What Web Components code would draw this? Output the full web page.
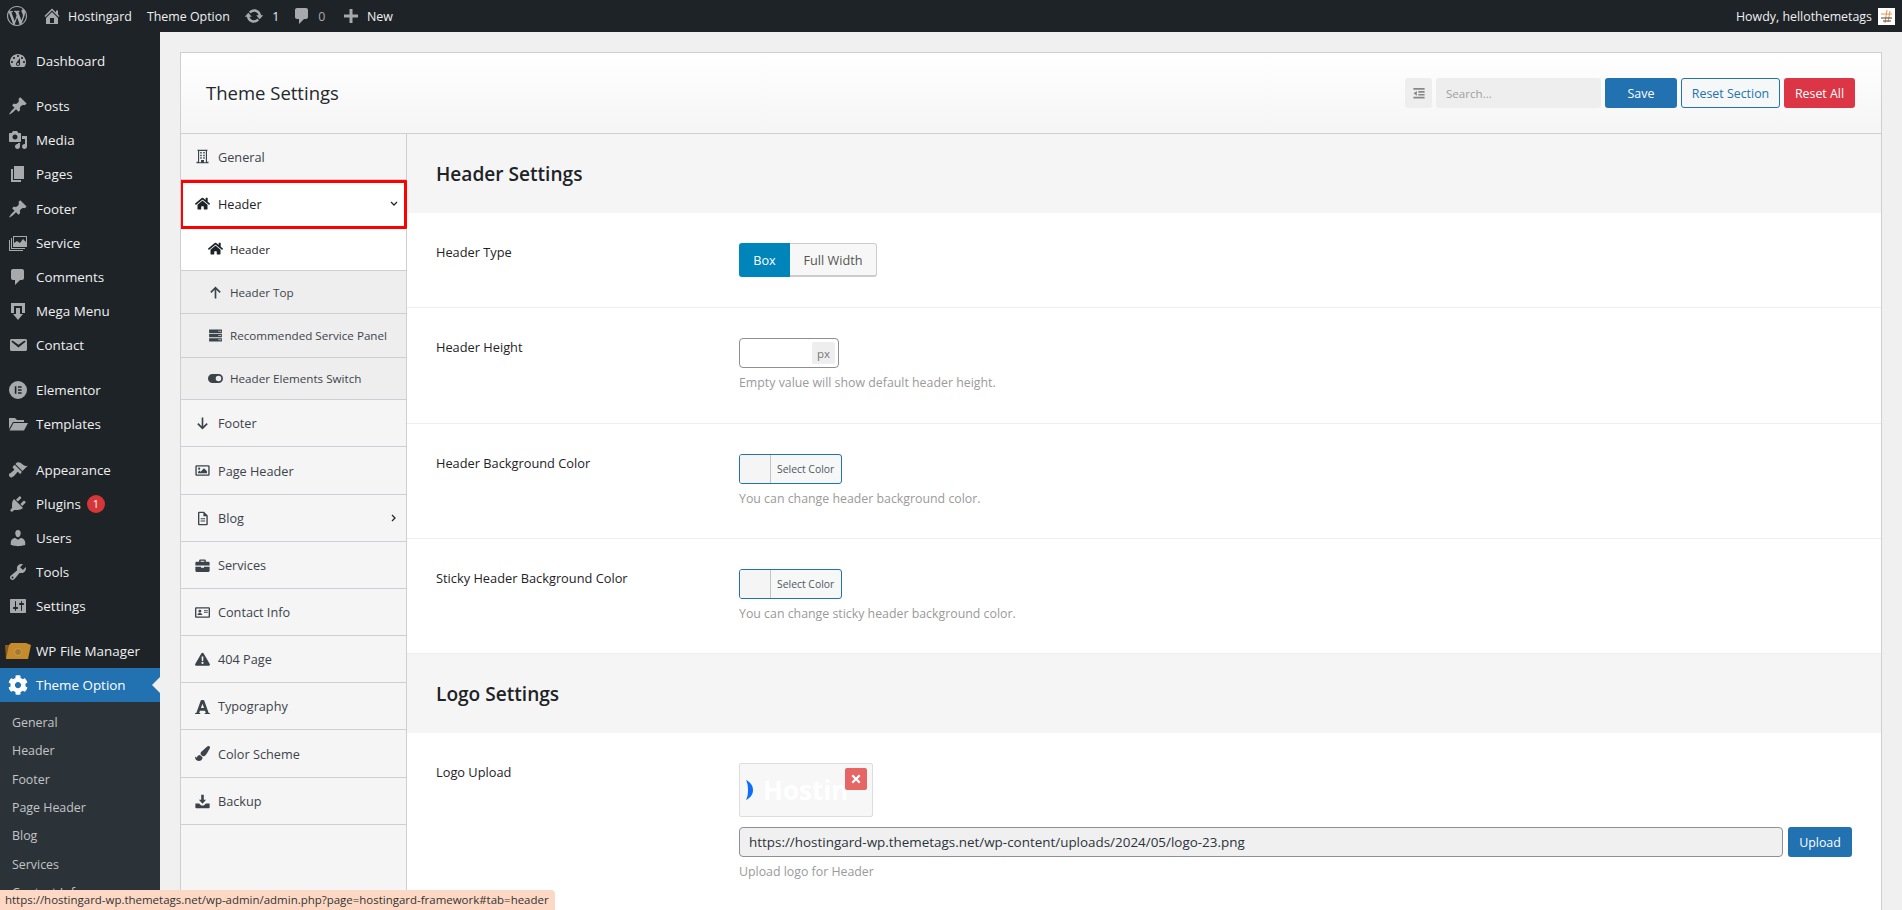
<!DOCTYPE html>
<html lang="en">
<head>
<meta charset="utf-8">
<title>Theme Settings</title>
<style>
  html, body { margin: 0; height: 910px; overflow: hidden; }
  body {
    background: #f0f0f1;
    font-family: "Open Sans", "Liberation Sans", sans-serif;
    font-size: 13px;
    color: #3c434a;
  }
  wp-shell { display: block; }
</style>
</head>
<body>
<wp-shell>
  <admin-bar slot="bar"></admin-bar>
  <side-menu slot="menu">
    <menu-item icon="dashboard" class="first">Dashboard</menu-item>
    <menu-sep></menu-sep>
    <menu-item icon="pin">Posts</menu-item>
    <menu-item icon="media">Media</menu-item>
    <menu-item icon="page">Pages</menu-item>
    <menu-item icon="pin">Footer</menu-item>
    <menu-item icon="images">Service</menu-item>
    <menu-item icon="comment">Comments</menu-item>
    <menu-item icon="mega">Mega Menu</menu-item>
    <menu-item icon="email">Contact</menu-item>
    <menu-sep></menu-sep>
    <menu-item icon="elementor">Elementor</menu-item>
    <menu-item icon="folder">Templates</menu-item>
    <menu-sep></menu-sep>
    <menu-item icon="brush">Appearance</menu-item>
    <menu-item icon="plugin" badge="1">Plugins</menu-item>
    <menu-item icon="users">Users</menu-item>
    <menu-item icon="tools">Tools</menu-item>
    <menu-item icon="sliders">Settings</menu-item>
    <menu-sep style="--gap:10.2px"></menu-sep>
    <menu-item icon="filemanager">WP File Manager</menu-item>
    <menu-item icon="gear" current>Theme Option</menu-item>
    <sub-menu>
      <a>General</a><a>Header</a><a>Footer</a><a>Page Header</a><a>Blog</a><a>Services</a><a>Contact Info</a>
    </sub-menu>
  </side-menu>

  <settings-card slot="main">
    <tab-item icon="building" style="--h:46px">General</tab-item>
    <tab-item icon="home" active marked arrow="down" style="--h:49px">Header</tab-item>
    <tab-item icon="home" sub active style="--h:42px">Header</tab-item>
    <tab-item icon="up" sub style="--h:43px">Header Top</tab-item>
    <tab-item icon="server" sub style="--h:44px">Recommended Service Panel</tab-item>
    <tab-item icon="toggle" sub style="--h:42px">Header Elements Switch</tab-item>
    <tab-item icon="down" style="--h:47px">Footer</tab-item>
    <tab-item icon="image" style="--h:48px">Page Header</tab-item>
    <tab-item icon="file" arrow="right" style="--h:47px">Blog</tab-item>
    <tab-item icon="briefcase" style="--h:47px">Services</tab-item>
    <tab-item icon="idcard" style="--h:47px">Contact Info</tab-item>
    <tab-item icon="warning" style="--h:47px">404 Page</tab-item>
    <tab-item icon="font" style="--h:47px">Typography</tab-item>
    <tab-item icon="paint" style="--h:48px">Color Scheme</tab-item>
    <tab-item icon="download" style="--h:47px">Backup</tab-item>

    <section-title slot="panel" style="--h:79px">Header Settings</section-title>
    <setting-row slot="panel" label="Header Type" style="--h:95px">
      <button-set></button-set>
    </setting-row>
    <setting-row slot="panel" label="Header Height" desc="Empty value will show default header height." style="--h:116px">
      <unit-input></unit-input>
    </setting-row>
    <setting-row slot="panel" label="Header Background Color" desc="You can change header background color." style="--h:115px">
      <color-pick></color-pick>
    </setting-row>
    <setting-row slot="panel" label="Sticky Header Background Color" desc="You can change sticky header background color." style="--h:115px">
      <color-pick></color-pick>
    </setting-row>
    <section-title slot="panel" style="--h:79px">Logo Settings</section-title>
    <setting-row slot="panel" label="Logo Upload" desc="Upload logo for Header" style="--h:190px">
      <logo-upload></logo-upload>
    </setting-row>
  </settings-card>
</wp-shell>
<status-tip>https://hostingard-wp.themetags.net/wp-admin/admin.php?page=hostingard-framework#tab=header</status-tip>

<script>
const ICONS = {
  wp: [20, '<path d="M20 10c0-5.51-4.49-10-10-10C4.48 0 0 4.49 0 10c0 5.52 4.48 10 10 10 5.51 0 10-4.48 10-10zM7.78 15.37L4.37 6.22c.55-.02 1.17-.08 1.17-.08.5-.06.44-1.13-.06-1.11 0 0-1.45.11-2.37.11-.18 0-.37 0-.58-.01C4.12 2.69 6.87 1.11 10 1.11c2.33 0 4.45.87 6.05 2.34-.68-.11-1.65.39-1.65 1.58 0 .74.45 1.36.9 2.1.35.61.55 1.36.55 2.46 0 1.49-1.4 5-1.4 5l-3.03-8.37c.54-.02.82-.17.82-.17.5-.05.44-1.25-.06-1.22 0 0-1.44.12-2.38.12-.87 0-2.33-.12-2.33-.12-.5-.03-.56 1.2-.06 1.22l.92.08 1.26 3.41zM17.41 10c.24-.64.74-1.87.43-4.25.7 1.29 1.05 2.71 1.05 4.25 0 3.29-1.73 6.24-4.4 7.78.97-2.59 1.94-5.2 2.92-7.78zM6.1 18.09C3.12 16.65 1.11 13.53 1.11 10c0-1.3.23-2.48.72-3.59C3.25 10.3 4.67 14.2 6.1 18.09zm4.03-6.63l2.58 6.98c-.86.29-1.76.45-2.71.45-.79 0-1.57-.11-2.29-.33.81-2.38 1.62-4.74 2.42-7.1z"/>'],
  dashboard: [20, '<path d="M3.76 16h12.48c1.1-1.37 1.76-3.11 1.76-5 0-4.42-3.58-8-8-8s-8 3.58-8 8c0 1.89.66 3.63 1.76 5zM10 4c.55 0 1 .45 1 1s-.45 1-1 1-1-.45-1-1 .45-1 1-1zM6 6c.55 0 1 .45 1 1s-.45 1-1 1-1-.45-1-1 .45-1 1-1zm8 0c.55 0 1 .45 1 1s-.45 1-1 1-1-.45-1-1 .45-1 1-1zm-5.37 5.55L12 7v6c0 1.1-.9 2-2 2s-2-.9-2-2c0-.57.24-1.08.63-1.45zM4 10c.55 0 1 .45 1 1s-.45 1-1 1-1-.45-1-1 .45-1 1-1zm12 0c.55 0 1 .45 1 1s-.45 1-1 1-1-.45-1-1 .45-1 1-1zm-5 3c0-.55-.45-1-1-1s-1 .45-1 1 .45 1 1 1 1-.45 1-1z" fill-rule="evenodd"/>'],
  pin: [20, '<path d="M10.44 3.02l1.82-1.82 6.36 6.35-1.83 1.82c-1.05-.68-2.48-.57-3.41.36l-.75.75c-.92.93-1.04 2.35-.35 3.41l-1.83 1.82-2.41-2.41-2.8 2.79c-.42.42-3.38 2.71-3.8 2.29s1.86-3.39 2.28-3.81l2.79-2.79L4.1 9.36l1.83-1.82c1.05.69 2.48.57 3.4-.36l.75-.75c.93-.92 1.05-2.35.36-3.41z"/>'],
  media: [20, '<path d="M13 11V4c0-.55-.45-1-1-1h-1.67L9 1H5L3.67 3H2c-.55 0-1 .45-1 1v7c0 .55.45 1 1 1h10c.55 0 1-.45 1-1zM7 4.5c1.38 0 2.5 1.12 2.5 2.5S8.38 9.5 7 9.5 4.5 8.38 4.5 7 5.62 4.5 7 4.5zM14 6h5v10.5c0 1.38-1.12 2.5-2.5 2.5S14 17.88 14 16.5s1.12-2.5 2.5-2.5c.17 0 .34.02.5.05V9h-3V6zm-4 8.05V13h2v3.5c0 1.38-1.12 2.5-2.5 2.5S7 17.88 7 16.5 8.12 14 9.5 14c.17 0 .34.02.5.05z"/>'],
  page: [20, '<path d="M6 15V2h10v13H6zm-1 1h8v2H3V5h2v11z"/>'],
  images: [20, '<path fill-rule="evenodd" d="M5 3h14v11H5zM6 4v6l3-2 3 2 3-4 3 3V4zM3 5h1v10h13v1H3zM1 7h1v10h13v1H1z"/>'],
  comment: [20, '<path d="M5 2h9c1.1 0 2 .9 2 2v7c0 1.1-.9 2-2 2h-2l-5 5v-5H5c-1.1 0-2-.9-2-2V4c0-1.1.9-2 2-2z"/>'],
  mega: [20, '<path d="M3 2h14v10h-3V5H6v7H3z"/><path d="M8 7h4v6h3l-5 6-5-6h3z"/>'],
  email: [20, '<path d="M3.87 4h13.25C18.37 4 19 4.59 19 5.79v8.42c0 1.19-.63 1.79-1.88 1.79H3.87c-1.25 0-1.88-.6-1.88-1.79V5.79c0-1.2.63-1.79 1.88-1.79zm6.62 8.6l6.74-5.53c.24-.2.43-.66.13-1.07-.29-.41-.82-.42-1.17-.17l-5.7 3.86L4.8 5.83c-.35-.25-.88-.24-1.17.17-.3.41-.11.87.13 1.07z"/>'],
  elementor: [20, '<path fill-rule="evenodd" d="M10 1a9 9 0 100 18 9 9 0 000-18zM6.8 6.2h1.6v7.6H6.8zM10 6.2h3.6v1.5H10zM10 9.2h3.6v1.5H10zM10 12.3h3.6v1.5H10z"/>'],
  folder: [20, '<path d="M1 4h6l2 2h7v2H5L1 15z"/><path d="M5.5 9H20l-4 7.5H1.5z"/>'],
  brush: [20, '<path d="M14.48 11.06L7.41 3.99l1.5-1.5c.5-.56 2.3-.47 3.51.32 1.21.8 1.43 1.28 2.91 2.1 1.18.64 2.45 1.26 4.45.85zm-.71.71L6.7 4.7 4.93 6.47c-.39.39-.39 1.02 0 1.41l1.06 1.06c.39.39.39 1.03 0 1.42-.6.6-1.43 1.11-2.21 1.69-.35.26-.7.53-1.01.84C1.43 13.23.91 14.1 1 15.19c.12 1.21.99 2.08 2.2 2.2 1.08.1 1.96-.42 3.31-1.77.31-.31.58-.66.84-1.01.58-.78 1.09-1.61 1.69-2.21.39-.39 1.03-.39 1.42 0l1.06 1.06c.39.39 1.02.39 1.41 0z"/>'],
  plugin: [20, '<path d="M13.11 4.36L9.87 7.6 8 5.73l3.24-3.24c.35-.34 1.05-.2 1.56.32.52.51.66 1.21.31 1.55zm-8 1.77l.91-1.12 9.01 9.01-1.19.84c-.71.71-2.63 1.16-3.82 1.16H6.14L4.9 17.26c-.59.59-1.54.59-2.12 0-.59-.58-.59-1.53 0-2.12l1.24-1.24v-3.88c0-1.13.4-3.19 1.09-3.89zm7.26 3.97l3.24-3.24c.34-.35 1.04-.21 1.55.31.52.51.66 1.21.31 1.55l-3.24 3.25z"/>'],
  users: [20, '<path d="M10 9.25c-2.27 0-2.73-3.44-2.73-3.44C7 4.02 7.82 2 9.97 2c2.16 0 2.98 2.02 2.71 3.81 0 0-.41 3.44-2.68 3.44zm0 2.57L12.72 10c2.39 0 4.52 2.33 4.52 4.53v2.49s-3.65 1.13-7.24 1.13c-3.65 0-7.24-1.13-7.24-1.13v-2.49c0-2.25 1.94-4.48 4.47-4.48z"/>'],
  tools: [20, '<path d="M16.68 9.77c-1.34 1.34-3.3 1.67-4.95.99l-5.41 6.52c-.99.99-2.59.99-3.58 0s-.99-2.59 0-3.57l6.52-5.42c-.68-1.65-.35-3.61.99-4.95 1.28-1.28 3.12-1.62 4.72-1.06l-2.89 2.89 2.82 2.82 2.86-2.87c.53 1.58.18 3.39-1.08 4.65zM3.81 16.21c.4.39 1.04.39 1.43 0 .4-.4.4-1.04 0-1.43-.39-.4-1.03-.4-1.43 0-.39.39-.39 1.03 0 1.43z"/>'],
  sliders: [20, '<path d="M18 16V4c0-.55-.45-1-1-1H3c-.55 0-1 .45-1 1v12c0 .55.45 1 1 1h14c.55 0 1-.45 1-1zM8 11h1c.55 0 1 .45 1 1s-.45 1-1 1H8v1.5c0 .28-.22.5-.5.5s-.5-.22-.5-.5V13H6c-.55 0-1-.45-1-1s.45-1 1-1h1V5.5c0-.28.22-.5.5-.5s.5.22.5.5V11zm5-2h-1c-.55 0-1-.45-1-1s.45-1 1-1h1V5.5c0-.28.22-.5.5-.5s.5.22.5.5V7h1c.55 0 1 .45 1 1s-.45 1-1 1h-1v5.5c0 .28-.22.5-.5.5s-.5-.22-.5-.5V9z"/>'],
  update: [20, '<path d="M10.2 3.28c3.53 0 6.43 2.61 6.92 6h2.08l-3.5 4-3.5-4h2.32c-.45-1.97-2.21-3.45-4.32-3.45-1.45 0-2.73.71-3.54 1.78L4.95 5.66C6.23 4.2 8.11 3.28 10.2 3.28zm-.4 13.44c-3.52 0-6.43-2.61-6.92-6H.8l3.5-4c1.17 1.33 2.33 2.67 3.5 4H5.48c.45 1.97 2.21 3.45 4.32 3.45 1.45 0 2.73-.71 3.54-1.78l1.71 1.95c-1.28 1.46-3.15 2.38-5.25 2.38z"/>'],
  wphome: [20, '<path fill-rule="evenodd" d="M16 8.5l1.53 1.53-1.06 1.06L10 4.62l-6.47 6.47-1.06-1.06L10 2.5l4 4v-2h2v4zm-6-2.46l6 5.99V18H4v-5.97zM12 17v-5H8v5h4z"/>'],
  plus: [20, '<path d="M17 8.5v3h-5.5V17h-3v-5.5H3v-3h5.5V3h3v5.5z"/>'],
  gear: [512, '<path d="M487.4 315.7l-42.6-24.6c4.3-23.2 4.3-47 0-70.2l42.6-24.6c4.9-2.8 7.1-8.6 5.5-14-11.1-35.6-30-67.8-54.7-94.6-3.8-4.1-10-5.1-14.8-2.3L380.8 110c-17.9-15.4-38.5-27.3-60.8-35.1V25.8c0-5.6-3.9-10.5-9.4-11.7-36.7-8.2-74.3-7.8-109.2 0-5.5 1.2-9.4 6.1-9.4 11.7V75c-22.2 7.9-42.8 19.8-60.8 35.1L88.7 85.5c-4.9-2.8-11-1.9-14.8 2.3-24.7 26.7-43.6 58.9-54.7 94.6-1.7 5.4.6 11.2 5.5 14L67.3 221c-4.3 23.2-4.3 47 0 70.2l-42.6 24.6c-4.9 2.8-7.1 8.6-5.5 14 11.1 35.6 30 67.8 54.7 94.6 3.8 4.1 10 5.1 14.8 2.3l42.6-24.6c17.9 15.4 38.5 27.3 60.8 35.1v49.2c0 5.6 3.9 10.5 9.4 11.7 36.7 8.2 74.3 7.8 109.2 0 5.5-1.2 9.4-6.1 9.4-11.7v-49.2c22.2-7.9 42.8-19.8 60.8-35.1l42.6 24.6c4.9 2.8 11 1.9 14.8-2.3 24.7-26.7 43.6-58.9 54.7-94.6 1.5-5.5-.7-11.3-5.6-14.1zM256 336c-44.1 0-80-35.9-80-80s35.9-80 80-80 80 35.9 80 80-35.9 80-80 80z"/>'],
  home: [576, '<path d="M280.37 148.26L96 300.11V464a16 16 0 0 0 16 16l112.06-.29a16 16 0 0 0 15.92-16V368a16 16 0 0 1 16-16h64a16 16 0 0 1 16 16v95.64a16 16 0 0 0 16 16.05L464 480a16 16 0 0 0 16-16V300L295.67 148.26a12.19 12.19 0 0 0-15.3 0zM571.6 251.47L488 182.56V44.05a12 12 0 0 0-12-12h-56a12 12 0 0 0-12 12v72.61L318.47 43a48 48 0 0 0-61 0L4.34 251.47a12 12 0 0 0-1.6 16.9l25.5 31A12 12 0 0 0 45.15 301l235.22-193.74a12.19 12.19 0 0 1 15.3 0L530.9 301a12 12 0 0 0 16.9-1.6l25.5-31a12 12 0 0 0-1.7-16.93z"/>'],
  building: [20, '<path fill-rule="evenodd" d="M3 1h14v1h-1v15h2v2H2v-2h2V2H3zM5.500 2.500V17.500h2.500v-3h4v3h2.500V2.500zM7 4h2v2H7zM11 4h2v2h-2zM7 7.500h2v2H7zM11 7.500h2v2h-2zM7 11h2v2H7zM11 11h2v2h-2z"/>'],
  up: [20, '<path d="M10 2l7 7-1.600 1.600-4.300-4.200V18H8.900V6.400l-4.300 4.200L3 9z"/>'],
  down: [20, '<path d="M10 18l7-7-1.600-1.600-4.300 4.200V2H8.900v11.600L4.600 9.400 3 11z"/>'],
  server: [20, '<path fill-rule="evenodd" d="M1.500 2h17v4.500h-17zM14 3.600h1.500v1.300H14zM16.200 3.600h1v1.300h-1zM1.500 7.800h17v4.500h-17zM14 9.400h1.500v1.300H14zM16.200 9.400h1v1.300h-1zM1.500 13.500h17V18h-17zM14 15.100h1.500v1.300H14zM16.200 15.100h1v1.300h-1z"/>'],
  toggle: [20, '<path fill-rule="evenodd" d="M6 4h8a6 6 0 010 12H6A6 6 0 016 4zM14 6.300a3.700 3.700 0 100 7.400 3.700 3.700 0 000-7.400z"/>'],
  image: [20, '<path fill-rule="evenodd" d="M2 3h16a1.500 1.500 0 011.500 1.500v11A1.500 1.500 0 0118 17H2A1.500 1.500 0 01.500 15.500v-11A1.500 1.500 0 012 3zM2.300 4.800v10.400h15.400V4.800zM5.500 6a1.500 1.500 0 110 3 1.500 1.500 0 010-3zM4 13.500V12l2-2 1.500 1.500L12 7l4 4v2.500z"/>'],
  file: [20, '<path fill-rule="evenodd" d="M5 1h7l5 5v11.500a1.500 1.500 0 01-1.500 1.500h-10A1.500 1.500 0 014 17.500V2.500A1.500 1.500 0 015 1zM5.800 2.800v14.400h9.400V7h-4V2.800zM7.500 9.500h6V11h-6zM7.500 12.500h6V14h-6z"/>'],
  briefcase: [20, '<path fill-rule="evenodd" d="M7 2h6a1.500 1.500 0 011.500 1.500V5H18a1.500 1.500 0 011.500 1.500V10H.5V6.500A1.500 1.500 0 012 5h3.500V3.500A1.500 1.500 0 017 2zM7.500 3.800V5h5V3.800zM.5 11.500H8V13h4v-1.500h7.500V17a1.500 1.500 0 01-1.500 1.500H2A1.500 1.500 0 01.500 17z"/>'],
  idcard: [20, '<path fill-rule="evenodd" d="M1.500 3h17A1.500 1.500 0 0120 4.500v11a1.500 1.500 0 01-1.500 1.500h-17A1.500 1.500 0 010 15.500v-11A1.500 1.500 0 011.500 3zM1.800 4.800v10.400h16.400V4.800zM6.500 6.300a1.900 1.900 0 110 3.800 1.900 1.900 0 010-3.800zM3.300 13.300c0-1.700 1.300-2.700 3.200-2.700s3.200 1 3.200 2.700zM12 7h5v1.300h-5zM12 9.500h5v1.300h-5z"/>'],
  warning: [20, '<path fill-rule="evenodd" d="M10 1.500c.6 0 1.100.3 1.400.8l8.300 14.300c.6 1-.2 2.400-1.400 2.400H1.700c-1.200 0-2-1.400-1.400-2.400L8.600 2.300c.3-.5.8-.8 1.400-.8zM8.800 6.500l.3 6.200h1.800l.3-6.200zM10 13.700a1.500 1.500 0 100 3 1.500 1.500 0 000-3z"/>'],
  font: [448, '<path d="M432 416h-23.410L277.880 53.690A32 32 0 0 0 247.580 32h-47.160a32 32 0 0 0-30.300 21.690L39.410 416H16a16 16 0 0 0-16 16v32a16 16 0 0 0 16 16h128a16 16 0 0 0 16-16v-32a16 16 0 0 0-16-16h-19.580l23.300-64h152.560l23.300 64H304a16 16 0 0 0-16 16v32a16 16 0 0 0 16 16h128a16 16 0 0 0 16-16v-32a16 16 0 0 0-16-16zM176.850 272L224 142.510 271.150 272z"/>'],
  paint: [512, '<path d="M167.020 309.340c-40.120 2.580-76.530 17.860-97.190 72.300-2.350 6.210-8 9.980-14.590 9.980-11.110 0-45.460-27.670-55.250-34.350C0 439.620 37.930 512 128 512c75.860 0 128-43.770 128-120.190 0-3.110-.65-6.080-.97-9.130l-88.010-73.340zM457.890 0c-15.160 0-29.370 6.710-40.210 16.450C213.270 199.050 192 203.340 192 257.090c0 13.700 3.250 26.760 8.730 38.700l63.820 53.180c7.210 1.800 14.640 3.030 22.390 3.030 62.110 0 98.110-45.470 211.160-256.460 7.380-14.350 13.900-29.850 13.900-45.990C512 20.640 486 0 457.890 0z"/>'],
  download: [20, '<path d="M8.300 1h3.400v6.500h3.100L10 13 5.200 7.500h3.100z"/><path d="M.5 12.500h5l2.800 2.700h3.400l2.800-2.700h5V18a1 1 0 01-1 1h-17a1 1 0 01-1-1z"/>'],
  outdent: [20, '<path d="M2 3h16v2.500H2zM9 7.200h9v2.400H9zM9 11.300h9v2.400H9zM2 15.500h16V18H2zM7 7v7l-5-3.500z"/>'],
  close: [20, '<path d="M5.200 2.500L10 7.300l4.800-4.800 2.700 2.700L12.700 10l4.800 4.800-2.700 2.700-4.800-4.800-4.800 4.800-2.700-2.700L7.300 10 2.500 5.200z"/>']
};

function iconSvg(name, size) {
  if (name === "filemanager") {
    return `<svg width="${size}" height="${size}" viewBox="0 0 26 20">
      <path fill="#8a5a1a" d="M0 4h9l2-2h9v16H1z"/>
      <path fill="#c58a2c" d="M6 2h15l5 2-3 14H1l3-14z"/>
      <circle cx="13" cy="11" r="3.500" fill="#a3772f" stroke="#d9b36a" stroke-width=".6"/></svg>`;
  }
  const [box, body] = ICONS[name];
  return `<svg width="${size}" height="${size}" viewBox="0 0 ${box} ${box}" fill="currentColor" style="display:block">${body}</svg>`;
}

class WpShell extends HTMLElement {
  constructor() {
    super();
    this._shadowRoot = this.attachShadow({ mode: "open" });
    this._shadowRoot.innerHTML = `
      <style>
        :host { display: block; height: 910px; overflow: hidden; }
        .body { display: flex; height: 878px; }
        .main { flex: 1; min-width: 0; padding: 20px 20px 0 20px; }
      </style>
      <slot name="bar"></slot>
      <div class="body">
        <slot name="menu"></slot>
        <div class="main"><slot name="main"></slot></div>
      </div>
    `;
  }
}

class AdminBar extends HTMLElement {
  constructor() {
    super();
    this._shadowRoot = this.attachShadow({ mode: "open" });
    this._shadowRoot.innerHTML = `
      <style>
        :host {
          display: flex;
          height: 32px;
          background: #1d2327;
          color: #f0f0f1;
          font-size: 12.4px;
          align-items: center;
          padding-left: 7px;
          padding-right: 7px;
        }
        .ico { color: #a7aaad; flex: none; }
        .txt { margin-left: 6px; }
        .dim { color: #a7aaad; }
        .spacer { flex: 1; }
        .avatar { display: block; margin-left: 6px; background: #fff; }
      </style>
      <span class="ico">${iconSvg("wp", 20)}</span>
      <span class="ico" style="margin-left:15px">${iconSvg("wphome", 20)}</span>
      <span class="txt">Hostingard</span>
      <span class="txt" style="margin-left:15px">Theme Option</span>
      <span class="ico" style="margin-left:14.5px">${iconSvg("update", 20)}</span>
      <span class="txt" style="margin-left:8px">1</span>
      <span class="ico" style="margin-left:13px">${iconSvg("comment", 20)}</span>
      <span class="txt dim" style="margin-left:6px">0</span>
      <span class="ico" style="margin-left:15.5px">${iconSvg("plus", 20)}</span>
      <span class="txt">New</span>
      <span class="spacer"></span>
      <span>Howdy, hellothemetags</span>
      <svg class="avatar" width="17" height="17" viewBox="0 0 17 17">
        <path d="M9 2L7 15M12 3l-2 11M3 6h11" stroke="#e8944a" stroke-width="1" fill="none"/>
        <path d="M3 10h11M5 13h8" stroke="#444" stroke-width="1" fill="none"/>
      </svg>
    `;
  }
}

class SideMenu extends HTMLElement {
  constructor() {
    super();
    this._shadowRoot = this.attachShadow({ mode: "open" });
    this._shadowRoot.innerHTML = `
      <style>
        :host {
          display: block;
          flex: none;
          width: 160px;
          background: #1d2327;
          padding-top: 12px;
          box-sizing: border-box;
        }
      </style>
      <slot></slot>
    `;
  }
}

class MenuSep extends HTMLElement {
  constructor() {
    super();
    this.attachShadow({ mode: "open" }).innerHTML = `<style>:host { display: block; height: var(--gap, 11px); }</style>`;
  }
}

class MenuItem extends HTMLElement {
  constructor() {
    super();
    this._shadowRoot = this.attachShadow({ mode: "open" });
  }

  connectedCallback() {
    const icon = this.getAttribute("icon");
    const badge = this.getAttribute("badge");
    this._shadowRoot.innerHTML = `
      <style>
        :host {
          display: flex;
          position: relative;
          height: 34.15px;
          align-items: center;
          color: #f0f0f1;
          font-size: 13.4px;
        }
        :host([current]) {
          background: #2271b1;
          color: #fff;
          height: 34px;
        }
        :host([current]) .ico { color: #fff; }
        :host([current])::after {
          content: "";
          position: absolute;
          right: 0;
          top: 50%;
          margin-top: -8px;
          border: 8px solid transparent;
          border-right-color: #f0f0f1;
          border-left: 0;
        }
        .ico { width: 36px; display: flex; justify-content: center; color: #a7aaad; padding-right: 0; flex: none; }
        .badge {
          width: 18px;
          height: 18px;
          border-radius: 50%;
          background: #d63638;
          color: #fff;
          font-size: 11px;
          display: inline-flex;
          align-items: center;
          justify-content: center;
          margin-left: 6px;
        }
      </style>
      <span class="ico">${iconSvg(icon, icon === "filemanager" ? 26 : 20)}</span>
      <slot></slot>
      ${badge ? `<span class="badge">${badge}</span>` : ""}
    `;
  }
}

class SubMenu extends HTMLElement {
  constructor() {
    super();
    this._shadowRoot = this.attachShadow({ mode: "open" });
    this._shadowRoot.innerHTML = `
      <style>
        :host {
          display: block;
          background: #2c3338;
          padding: 7.5px 0 7px 12px;
          color: #c3c4c7;
          font-size: 12.4px;
        }
        ::slotted(a) {
          display: block;
          height: 28.3px;
          line-height: 28.3px;
        }
      </style>
      <slot></slot>
    `;
  }
}

class SettingsCard extends HTMLElement {
  constructor() {
    super();
    this._shadowRoot = this.attachShadow({ mode: "open" });
    this._shadowRoot.innerHTML = `
      <style>
        :host {
          display: block;
          height: 880px;
          background: #fff;
          border: 1px solid #ccd0d4;
          box-sizing: border-box;
          overflow: hidden;
          font-family: "Open Sans", "Liberation Sans", sans-serif;
        }
        header {
          display: flex;
          align-items: center;
          height: 80px;
          padding: 0 26px 0 25px;
          border-bottom: 1px solid #ccd0d4;
          background: linear-gradient(#ffffff, #f5f5f5);
        }
        h1 {
          margin: 0 0 2px;
          flex: 1;
          font-size: 18.5px;
          font-weight: 400;
          color: #23282d;
        }
        .tools { display: flex; gap: 4px; }
        .tools > * {
          box-sizing: border-box;
          height: 30px;
          border-radius: 3px;
          display: flex;
          align-items: center;
          justify-content: center;
          font-size: 12.4px;
        }
        .toggle { width: 27px; background: #eee; color: #888; }
        .search { width: 165px; background: #eee; color: #a0a0a0; justify-content: flex-start !important; padding-left: 10px; font-size: 11.600px !important; }
        .save { width: 72px; background: #2271b1; color: #fff; }
        .reset { width: 99px; border: 1px solid #2271b1; color: #2271b1; background: #f6f7f7; }
        .all { width: 71px; background: #dc3545; color: #fff; }
        .cols { display: flex; height: 800px; }
        nav { width: 226px; flex: none; background: #f5f5f5; border-right: 1px solid #ccd0d4; box-sizing: border-box; }
        .panel { flex: 1; min-width: 0; }
      </style>
      <header>
        <h1>Theme Settings</h1>
        <div class="tools">
          <span class="toggle">${iconSvg("outdent", 14)}</span>
          <span class="search">Search...</span>
          <span class="save">Save</span>
          <span class="reset">Reset Section</span>
          <span class="all">Reset All</span>
        </div>
      </header>
      <div class="cols">
        <nav><slot></slot></nav>
        <div class="panel"><slot name="panel"></slot></div>
      </div>
    `;
  }
}

class TabItem extends HTMLElement {
  constructor() {
    super();
    this._shadowRoot = this.attachShadow({ mode: "open" });
  }

  connectedCallback() {
    const arrow = this.getAttribute("arrow");
    const chevron = arrow === "down" ? "M1 2l3 3 3-3" : "M2 1l3 3-3 3";
    const size = this.getAttribute("icon") === "warning" ? 16 : 15;
    this._shadowRoot.innerHTML = `
      <style>
        :host {
          display: flex;
          position: relative;
          box-sizing: border-box;
          height: var(--h, 47px);
          align-items: center;
          padding-left: 14px;
          border-bottom: 1px solid #ccd0d4;
          color: #3c434a;
          font-size: 12.7px;
          background: #f5f5f5;
        }
        :host([sub]) { padding-left: 27px; font-size: 11.65px; background: #eee; }
        :host([sub]) .ico { margin-right: 7px; }
        :host([active]) { background: #fff; color: #1d2327; }
        :host([marked]) { border-bottom-color: transparent; }
        :host([marked])::after {
          content: "";
          position: absolute;
          left: -1px;
          right: -1px;
          top: 0;
          bottom: -1px;
          border: 3px solid #f00;
          border-radius: 1px;
        }
        .ico { width: 15px; height: 16px; display: flex; align-items: center; justify-content: center; margin-right: 8px; flex: none; overflow: visible; }
        .arrow { position: absolute; right: 8px; top: 50%; margin-top: -4px; display: block; }
      </style>
      <span class="ico">${iconSvg(this.getAttribute("icon"), size)}</span>
      <slot></slot>
      ${arrow ? `<svg class="arrow" width="8" height="8" viewBox="0 0 8 8"><path d="${chevron}" fill="none" stroke="#23282d" stroke-width="1.300"/></svg>` : ""}
    `;
  }
}

class SectionTitle extends HTMLElement {
  constructor() {
    super();
    this._shadowRoot = this.attachShadow({ mode: "open" });
    this._shadowRoot.innerHTML = `
      <style>
        :host {
          display: flex;
          box-sizing: border-box;
          height: var(--h);
          align-items: center;
          padding-left: 29px;
          background: #f5f5f5;
          font-size: 19.1px;
          font-weight: 600;
          color: #1d2327;
        }
      </style>
      <slot></slot>
    `;
  }
}

class SettingRow extends HTMLElement {
  constructor() {
    super();
    this._shadowRoot = this.attachShadow({ mode: "open" });
  }

  connectedCallback() {
    const desc = this.getAttribute("desc");
    this._shadowRoot.innerHTML = `
      <style>
        :host {
          display: grid;
          grid-template-columns: 303px 1fr;
          box-sizing: border-box;
          height: var(--h);
          padding: 30px 30px 0 29px;
          border-bottom: 1px solid #eee;
        }
        .label { font-size: 12.8px; font-weight: 500; color: #1d2327; line-height: 18px; }
        .desc { font-size: 12.35px; color: #9a9a9a; margin-top: 7px; line-height: 16px; }
      </style>
      <div class="label">${this.getAttribute("label")}</div>
      <div>
        <slot></slot>
        ${desc ? `<div class="desc">${desc}</div>` : ""}
      </div>
    `;
  }
}

class ButtonSet extends HTMLElement {
  constructor() {
    super();
    this._shadowRoot = this.attachShadow({ mode: "open" });
    this._shadowRoot.innerHTML = `
      <style>
        :host { display: inline-flex; height: 34px; font-size: 12.7px; }
        span { display: flex; align-items: center; justify-content: center; box-sizing: border-box; }
        .on { width: 51px; background: #0085ba; color: #fff; border-radius: 3px 0 0 3px; }
        .off {
          width: 87px;
          background: #f7f7f7;
          color: #555;
          border: 1px solid #ccc;
          border-left: 0;
          border-bottom: 2px solid #ccc;
          border-radius: 0 3px 3px 0;
        }
      </style>
      <span class="on">Box</span>
      <span class="off">Full Width</span>
    `;
  }
}

class UnitInput extends HTMLElement {
  constructor() {
    super();
    this._shadowRoot = this.attachShadow({ mode: "open" });
    this._shadowRoot.innerHTML = `
      <style>
        :host {
          display: flex;
          box-sizing: border-box;
          width: 100px;
          height: 30px;
          border: 1px solid #8c8f94;
          border-radius: 4px;
          background: #fff;
          justify-content: flex-end;
          align-items: center;
          padding-right: 3px;
        }
        span {
          width: 23px;
          height: 22px;
          background: #eee;
          border-radius: 2px;
          color: #777;
          font-size: 11.5px;
          display: flex;
          align-items: center;
          justify-content: center;
        }
      </style>
      <span>px</span>
    `;
  }
}

class ColorPick extends HTMLElement {
  constructor() {
    super();
    this._shadowRoot = this.attachShadow({ mode: "open" });
    this._shadowRoot.innerHTML = `
      <style>
        :host {
          display: flex;
          box-sizing: border-box;
          width: 103px;
          height: 30px;
          border: 1px solid #2271b1;
          border-radius: 3px;
          overflow: hidden;
          background: #f6f7f7;
          font-size: 10.4px;
          color: #50575e;
        }
        .swatch { width: 30px; background: #f5f5f5; border-right: 1px solid #c3c4c7; flex: none; }
        .label { flex: 1; display: flex; align-items: center; padding-left: 6px; white-space: nowrap; }
      </style>
      <span class="swatch"></span>
      <span class="label">Select Color</span>
    `;
  }
}

class LogoUpload extends HTMLElement {
  constructor() {
    super();
    this._shadowRoot = this.attachShadow({ mode: "open" });
    this._shadowRoot.innerHTML = `
      <style>
        :host { display: block; }
        .preview {
          position: relative;
          box-sizing: border-box;
          width: 134px;
          height: 54px;
          border: 1px solid #ddd;
          border-radius: 2px;
          background: #f7f7f7;
          overflow: hidden;
          display: flex;
          align-items: center;
          padding-left: 6px;
        }
        .mark { flex: none; display: block; }
        .name { color: #fff; font-size: 26px; font-weight: 700; white-space: nowrap; margin-left: 10px; line-height: 30px; }
        .remove {
          position: absolute;
          right: 5px;
          top: 4px;
          width: 22px;
          height: 22px;
          border-radius: 2px;
          background: #e66565;
          color: #fff;
          display: flex;
          align-items: center;
          justify-content: center;
        }
        .line { display: flex; gap: 5px; margin-top: 10px; width: 1113px; }
        .url {
          flex: 1;
          box-sizing: border-box;
          height: 30px;
          border: 1px solid #8c8f94;
          border-radius: 4px;
          background: #f0f0f1;
          color: #2c3338;
          font-size: 13.43px;
          display: flex;
          align-items: center;
          padding-left: 9px;
        }
        .upload {
          width: 64px;
          height: 30px;
          border-radius: 3px;
          background: #2271b1;
          color: #fff;
          font-size: 12.4px;
          display: flex;
          align-items: center;
          justify-content: center;
        }
      </style>
      <div class="preview">
        <svg class="mark" width="7" height="20" viewBox="0 0 7 20"><path d="M0 0c4 2 7 5 7 10s-3 8-7 10c1.500-3 2-6 2-10S1.500 3 0 0z" fill="#0d6efd"/></svg>
        <span class="name">Hostin</span>
        <span class="remove">${iconSvg("close", 12)}</span>
      </div>
      <div class="line">
        <span class="url">https://hostingard-wp.themetags.net/wp-content/uploads/2024/05/logo-23.png</span>
        <span class="upload">Upload</span>
      </div>
    `;
  }
}

class StatusTip extends HTMLElement {
  constructor() {
    super();
    this._shadowRoot = this.attachShadow({ mode: "open" });
    this._shadowRoot.innerHTML = `
      <style>
        :host {
          position: fixed;
          left: 0;
          bottom: 0;
          box-sizing: border-box;
          width: 555px;
          height: 20px;
          padding-left: 5px;
          background: #fdd9c5;
          border-top-right-radius: 4px;
          color: #333;
          font-size: 11.48px;
          line-height: 20px;
          white-space: nowrap;
          overflow: hidden;
        }
      </style>
      <slot></slot>
    `;
  }
}

customElements.define("wp-shell", WpShell);
customElements.define("admin-bar", AdminBar);
customElements.define("side-menu", SideMenu);
customElements.define("menu-sep", MenuSep);
customElements.define("menu-item", MenuItem);
customElements.define("sub-menu", SubMenu);
customElements.define("settings-card", SettingsCard);
customElements.define("tab-item", TabItem);
customElements.define("section-title", SectionTitle);
customElements.define("setting-row", SettingRow);
customElements.define("button-set", ButtonSet);
customElements.define("unit-input", UnitInput);
customElements.define("color-pick", ColorPick);
customElements.define("logo-upload", LogoUpload);
customElements.define("status-tip", StatusTip);
</script>
</body>
</html>
